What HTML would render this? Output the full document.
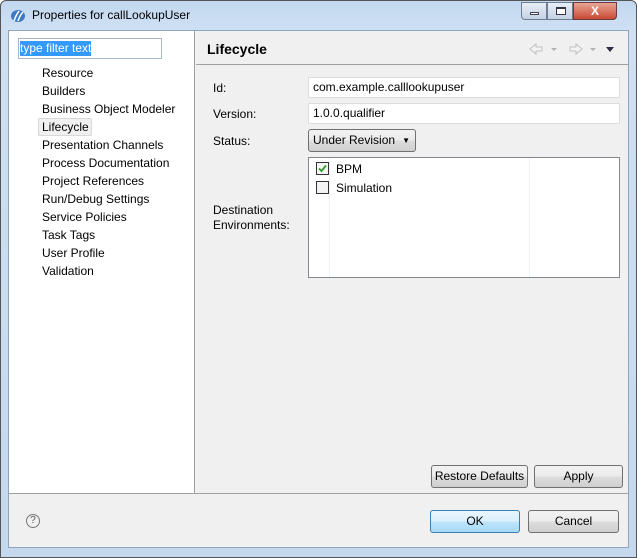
<!DOCTYPE html>
<html><head><style>
*{margin:0;padding:0;box-sizing:border-box}
body{width:637px;height:558px;overflow:hidden;background:#fff;font-family:"Liberation Sans",sans-serif;font-size:12px;color:#000;position:relative}
.a{position:absolute;white-space:nowrap}
.frame{position:absolute;left:0;top:0;width:637px;height:558px;background:linear-gradient(#c2d8f0,#cfe0f3 30px,#c4d8ee);border:1px solid #555;border-radius:6px 6px 0 0}
.client{position:absolute;left:8px;top:30px;width:621px;height:518px;background:#f0f0f0;border:1px solid #8fa4bd}
.left{position:absolute;left:9px;top:31px;width:186px;height:462px;background:#fff;border-right:1px solid #a0a0a0}
.btn{position:absolute;height:23px;border:1px solid #707070;border-radius:3px;background:linear-gradient(#f2f2f2,#ebebeb 50%,#dddddd 51%,#cfcfcf);text-align:center;line-height:21px}
.inp{position:absolute;background:#fff;border:1px solid #dcdcdc;height:21px;line-height:19px;padding-left:4px}
.item{position:absolute;left:42px}
</style></head><body>
<div class="frame"></div>
<svg class="a" style="left:10px;top:9px" width="16" height="14"><ellipse cx="8" cy="7" rx="7" ry="6" fill="#3d7ac4"/><path d="M4 12 Q6 6 9 2 M8 12 Q10 6 13 3" stroke="#fff" stroke-width="1.5" fill="none"/></svg>
<div class="a" style="left:32px;top:8px;font-size:12px">Properties for callLookupUser</div>
<div class="a" style="left:521px;top:2px;width:26px;height:18px;border:1px solid #6c7d94;border-radius:0 0 0 4px;background:linear-gradient(#e8eef6,#c4d2e4)"><div class="a" style="left:8px;top:9px;width:9px;height:3px;background:#fff;border:1px solid #445"></div></div>
<div class="a" style="left:547px;top:2px;width:26px;height:18px;border:1px solid #6c7d94;background:linear-gradient(#e8eef6,#c4d2e4)"><div class="a" style="left:8px;top:4px;width:10px;height:8px;border:1px solid #334;border-top-width:2px;background:#fff"></div></div>
<div class="a" style="left:573px;top:2px;width:44px;height:18px;border:1px solid #6c3a3a;border-radius:0 0 4px 0;background:linear-gradient(#e8a493,#c94a36);color:#fff;font-weight:bold;text-align:center;line-height:16px;font-size:12px">X</div>
<div class="client"></div>
<div class="left"></div>
<div class="a" style="left:18px;top:38px;width:144px;height:21px;border:1px solid #a9b8c9;background:#fff"><span style="position:absolute;left:1px;top:2px;background:#3399ff;color:#fff;line-height:15px">type filter text</span></div>
<div class="item a" style="top:66px">Resource</div>
<div class="item a" style="top:84px">Builders</div>
<div class="item a" style="top:102px">Business Object Modeler</div>
<div class="a" style="left:38px;top:118px;width:54px;height:18px;background:#f0f0f0;border:1px solid #d8d8d8;border-radius:2px"></div>
<div class="item a" style="top:120px">Lifecycle</div>
<div class="item a" style="top:138px">Presentation Channels</div>
<div class="item a" style="top:156px">Process Documentation</div>
<div class="item a" style="top:174px">Project References</div>
<div class="item a" style="top:192px">Run/Debug Settings</div>
<div class="item a" style="top:210px">Service Policies</div>
<div class="item a" style="top:228px">Task Tags</div>
<div class="item a" style="top:246px">User Profile</div>
<div class="item a" style="top:264px">Validation</div>
<div class="a" style="left:196px;top:64px;width:433px;height:1px;background:#a0a0a0"></div>
<div class="a" style="left:207px;top:41px;font-size:14px;font-weight:bold">Lifecycle</div>
<svg class="a" style="left:528px;top:42px" width="92" height="14">
<path d="M2 7 L8 2 L8 5 L14 5 L14 9 L8 9 L8 12 Z" fill="#f4f4f4" stroke="#c0c0c0"/>
<path d="M23 6 L29 6 L26 9 Z" fill="#b0b0b0"/>
<path d="M54 7 L48 2 L48 5 L42 5 L42 9 L48 9 L48 12 Z" fill="#f4f4f4" stroke="#c0c0c0"/>
<path d="M62 6 L68 6 L65 9 Z" fill="#b0b0b0"/>
<path d="M78 5 L86 5 L82 10 Z" fill="#2a2a40"/>
</svg>
<div class="a" style="left:213px;top:81px">Id:</div>
<div class="inp" style="left:308px;top:77px;width:312px">com.example.calllookupuser</div>
<div class="a" style="left:213px;top:107px">Version:</div>
<div class="inp" style="left:308px;top:103px;width:312px">1.0.0.qualifier</div>
<div class="a" style="left:213px;top:134px">Status:</div>
<div class="btn" style="left:308px;top:129px;width:108px;text-align:left;padding-left:4px">Under Revision <span style="position:absolute;right:5px;font-size:8px">▼</span></div>
<div class="a" style="left:213px;top:203px;line-height:15px">Destination<br>Environments:</div>
<div class="a" style="left:308px;top:157px;width:312px;height:121px;background:#fff;border:1px solid #828790"></div>
<div class="a" style="left:329px;top:158px;width:1px;height:119px;background:#eef2f6"></div>
<div class="a" style="left:529px;top:158px;width:1px;height:119px;background:#eef2f6"></div>
<div class="a" style="left:316px;top:162px;width:13px;height:13px;border:1px solid #333;background:#f4f4f4"><svg width="11" height="11" style="position:absolute;left:0;top:0"><path d="M2 5.5 L4.5 8 L9 2.5" stroke="#2a9d2a" stroke-width="1.8" fill="none"/></svg></div>
<div class="a" style="left:336px;top:162px">BPM</div>
<div class="a" style="left:316px;top:181px;width:13px;height:13px;border:1px solid #333;background:#f4f4f4"></div>
<div class="a" style="left:336px;top:181px">Simulation</div>
<div class="btn" style="left:431px;top:465px;width:97px">Restore Defaults</div>
<div class="btn" style="left:534px;top:465px;width:89px">Apply</div>
<div class="a" style="left:9px;top:493px;width:620px;height:1px;background:#a0a0a0"></div>
<div class="a" style="left:26px;top:514px;width:14px;height:14px;border:1px solid #777;border-radius:50%;text-align:center;font-size:10px;line-height:12px;color:#555">?</div>
<div class="btn" style="left:430px;top:510px;width:90px;border-color:#3c7fb1;background:linear-gradient(#eaf6fd,#d9f0fc 50%,#bee6fd 51%,#a7d9f5)">OK</div>
<div class="btn" style="left:528px;top:510px;width:91px">Cancel</div>
</body></html>
